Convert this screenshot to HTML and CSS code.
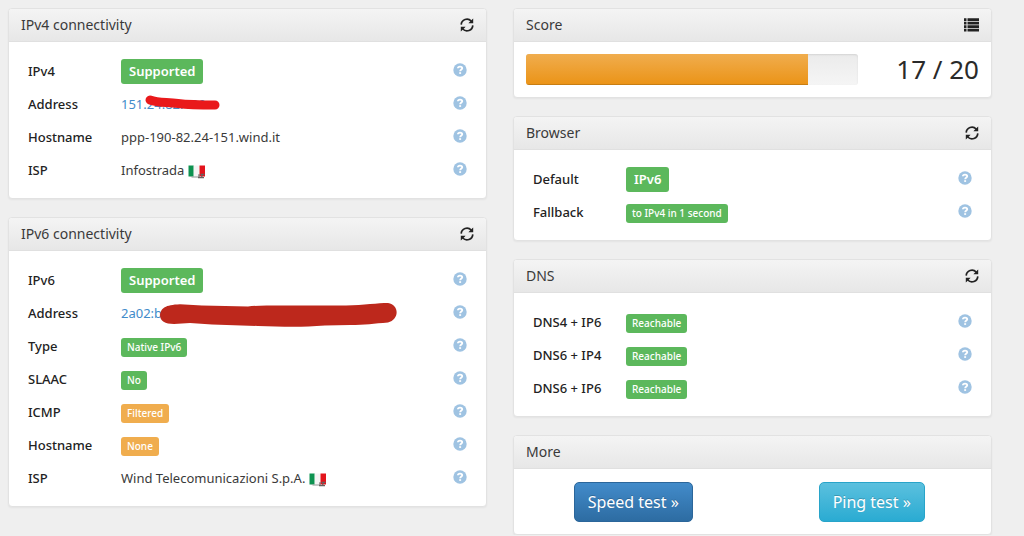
FILE: index.html
```html
<!DOCTYPE html>
<html lang="en">
<head>
    <meta charset="UTF-8">
    <meta name="viewport" content="width=device-width, initial-scale=1.0">
    <title>IPv6 test</title>
    <link rel="stylesheet" href="styles.css">
</head>
<body>

<svg class="sprite" aria-hidden="true">
    <symbol id="refresh" viewBox="0 0 14 14">
        <path d="M1.2 6.6A5.8 5.8 0 0 1 11.200 3M12.8 7.4A5.8 5.8 0 0 1 2.800 11" fill="none" stroke="currentColor" stroke-width="1.7"/>
        <path d="M13.200 .4V5.200H8.400L10 3.600 11.300 2.200zM.8 13.600V8.800H5.600L4 10.400 2.700 11.800z" fill="currentColor"/>
    </symbol>
    <symbol id="list" viewBox="0 0 15 14">
        <path d="M0 .3h2.500v2.700H0zM3.500 .3h11.500v2.700H3.500zM0 3.800h2.500v2.700H0zM3.500 3.800h11.500v2.700H3.500zM0 7.300h2.500v2.700H0zM3.500 7.300h11.500v2.700H3.500zM0 10.800h2.500v2.700H0zM3.500 10.800h11.500v2.700H3.500z" fill="currentColor"/>
    </symbol>
    <symbol id="help" viewBox="0 0 14 14">
        <circle cx="7" cy="7" r="6.700" fill="currentColor"/>
        <path d="M4.900 5.300C5 3.900 5.900 3.600 7 3.600c1.300 0 2.200.6 2.200 1.600C9.200 6.500 7.200 6.500 7.200 8.300" fill="none" stroke="#fff" stroke-width="1.900"/>
        <path d="M6.200 9.200h1.900v1.700H6.200z" fill="#fff"/>
    </symbol>
    <symbol id="flag" viewBox="0 0 18 14">
        <path d="M.5.500h5.200v11H.5z" fill="#0d9250"/>
        <path d="M5.700.500h5.800v11H5.700z" fill="#f4f4f4"/>
        <path d="M11.500.500h5.500v11h-5.500z" fill="#e3141c"/>
        <path d="M2 11.500h8l1.500 1H4z" fill="#8f9593"/>
        <path d="M11 9.300v3.200M12.500 9.300h4M14.500 9.300l-1 3.200M10 12.700h6" fill="none" stroke="#68605f" stroke-width="1.200"/>
    </symbol>
</svg>

<main class="container">

<div class="column">

<section class="panel">
    <header class="panel-heading">
        <h2>IPv4 connectivity</h2>
        <button class="icon-btn" aria-label="Refresh IPv4"><svg class="icon"><use href="#refresh"/></svg></button>
    </header>
    <div class="panel-body">
        <table>
            <tr><th scope="row">IPv4</th><td><span class="label label-lg">Supported</span></td><td class="help"><button class="icon-btn" aria-label="Help"><svg class="icon"><use href="#help"/></svg></button></td></tr>
            <tr><th scope="row">Address</th><td><span class="address"><a href="#">151.24.82.190</a><svg class="marker marker-v4" viewBox="0 0 76 18"><path d="M6 6C14 9 22 8 34 9.500S54 11 71 11" fill="none" stroke="#e9191b" stroke-width="9" stroke-linecap="round"/></svg></span></td><td class="help"><button class="icon-btn" aria-label="Help"><svg class="icon"><use href="#help"/></svg></button></td></tr>
            <tr><th scope="row">Hostname</th><td>ppp-190-82.24-151.wind.it</td><td class="help"><button class="icon-btn" aria-label="Help"><svg class="icon"><use href="#help"/></svg></button></td></tr>
            <tr><th scope="row">ISP</th><td>Infostrada <svg class="flag"><use href="#flag"/></svg></td><td class="help"><button class="icon-btn" aria-label="Help"><svg class="icon"><use href="#help"/></svg></button></td></tr>
        </table>
    </div>
</section>

<section class="panel">
    <header class="panel-heading">
        <h2>IPv6 connectivity</h2>
        <button class="icon-btn" aria-label="Refresh IPv6"><svg class="icon"><use href="#refresh"/></svg></button>
    </header>
    <div class="panel-body">
        <table>
            <tr><th scope="row">IPv6</th><td><span class="label label-lg">Supported</span></td><td class="help"><button class="icon-btn" aria-label="Help"><svg class="icon"><use href="#help"/></svg></button></td></tr>
            <tr><th scope="row">Address</th><td><span class="address"><a href="#">2a02:b</a><svg class="marker marker-v6" viewBox="0 0 238 26"><path d="M0 13C1 6 5 3 20 2.300L42 3.500 88 4.500C104 2.500 150 4 186 3.500 204 3 218 1 228 1 240 3 239 18 228 20.500 214 21.500 205 23 190 23L165 23.500C140 25.500 120 24.500 98 24L52 22.500 30 21 14 22C5 22 0 19 0 13z" fill="#bd281c"/></svg></span></td><td class="help"><button class="icon-btn" aria-label="Help"><svg class="icon"><use href="#help"/></svg></button></td></tr>
            <tr><th scope="row">Type</th><td><span class="label">Native IPv6</span></td><td class="help"><button class="icon-btn" aria-label="Help"><svg class="icon"><use href="#help"/></svg></button></td></tr>
            <tr><th scope="row">SLAAC</th><td><span class="label">No</span></td><td class="help"><button class="icon-btn" aria-label="Help"><svg class="icon"><use href="#help"/></svg></button></td></tr>
            <tr><th scope="row">ICMP</th><td><span class="label label-warning">Filtered</span></td><td class="help"><button class="icon-btn" aria-label="Help"><svg class="icon"><use href="#help"/></svg></button></td></tr>
            <tr><th scope="row">Hostname</th><td><span class="label label-warning">None</span></td><td class="help"><button class="icon-btn" aria-label="Help"><svg class="icon"><use href="#help"/></svg></button></td></tr>
            <tr><th scope="row">ISP</th><td>Wind Telecomunicazioni S.p.A. <svg class="flag"><use href="#flag"/></svg></td><td class="help"><button class="icon-btn" aria-label="Help"><svg class="icon"><use href="#help"/></svg></button></td></tr>
        </table>
    </div>
</section>

</div>

<div class="column">

<section class="panel">
    <header class="panel-heading">
        <h2>Score</h2>
        <button class="icon-btn" aria-label="Score details"><svg class="icon icon-list"><use href="#list"/></svg></button>
    </header>
    <div class="panel-body score">
        <div class="progress"><div class="progress-bar" style="width: 85%"></div></div>
        <div class="points">17 / 20</div>
    </div>
</section>

<section class="panel">
    <header class="panel-heading">
        <h2>Browser</h2>
        <button class="icon-btn" aria-label="Refresh browser"><svg class="icon"><use href="#refresh"/></svg></button>
    </header>
    <div class="panel-body">
        <table>
            <tr><th scope="row">Default</th><td><span class="label label-lg">IPv6</span></td><td class="help"><button class="icon-btn" aria-label="Help"><svg class="icon"><use href="#help"/></svg></button></td></tr>
            <tr><th scope="row">Fallback</th><td><span class="label">to IPv4 in 1 second</span></td><td class="help"><button class="icon-btn" aria-label="Help"><svg class="icon"><use href="#help"/></svg></button></td></tr>
        </table>
    </div>
</section>

<section class="panel">
    <header class="panel-heading">
        <h2>DNS</h2>
        <button class="icon-btn" aria-label="Refresh DNS"><svg class="icon"><use href="#refresh"/></svg></button>
    </header>
    <div class="panel-body">
        <table>
            <tr><th scope="row">DNS4 + IP6</th><td><span class="label">Reachable</span></td><td class="help"><button class="icon-btn" aria-label="Help"><svg class="icon"><use href="#help"/></svg></button></td></tr>
            <tr><th scope="row">DNS6 + IP4</th><td><span class="label">Reachable</span></td><td class="help"><button class="icon-btn" aria-label="Help"><svg class="icon"><use href="#help"/></svg></button></td></tr>
            <tr><th scope="row">DNS6 + IP6</th><td><span class="label">Reachable</span></td><td class="help"><button class="icon-btn" aria-label="Help"><svg class="icon"><use href="#help"/></svg></button></td></tr>
        </table>
    </div>
</section>

<section class="panel">
    <header class="panel-heading">
        <h2>More</h2>
    </header>
    <div class="panel-body more">
        <a class="btn btn-primary" href="#">Speed test »</a>
        <a class="btn btn-info" href="#">Ping test »</a>
    </div>
</section>

</div>

</main>

</body>
</html>
```
FILE: styles.css
```css
*{
    box-sizing: border-box;
}

body{
    margin: 0;
    background-color: #efefef;
    color: #3a3a3a;
    font-family: "Noto Sans", "Open Sans", sans-serif;
    font-size: 13px;
    line-height: 19px;
}

.sprite{
    display: none;
}

.container{
    display: grid;
    grid-template-columns: 1fr 1fr;
    gap: 26px;
    padding: 8px 32px 0 8px;
}

.column{
    display: flex;
    flex-direction: column;
    gap: 18px;
}

.panel{
    background-color: white;
    border: 1px solid #e2e2e2;
    border-radius: 4px;
    box-shadow: 0 1px 2px rgba(0, 0, 0, 0.05);
}

.panel-heading{
    display: flex;
    justify-content: space-between;
    align-items: center;
    height: 33px;
    padding: 0 12px 1px;
    background-image: linear-gradient(#f4f4f4, #e7e7e7);
    border-bottom: 1px solid #e0e0e0;
    border-radius: 3px 3px 0 0;
}

.panel-heading h2{
    margin: 0;
    padding-bottom: 1px;
    font-size: 14px;
    font-weight: 400;
}

.panel-body{
    padding: 12px;
}

.icon-btn{
    display: flex;
    padding: 0;
    border: none;
    background: none;
    color: #222;
    cursor: pointer;
}

.icon{
    width: 14px;
    height: 14px;
}

.icon-list{
    width: 15px;
}

table{
    width: 100%;
    table-layout: fixed;
    border-collapse: collapse;
}

tr{
    height: 33px;
}

th, td{
    padding: 2px 0 0;
    text-align: left;
    vertical-align: middle;
    white-space: nowrap;
}

th{
    width: 100px;
    padding-left: 7px;
    color: #222;
    font-weight: 500;
}

.help{
    width: 21px;
    padding: 0 0 1px;
}

.help .icon-btn{
    color: #9fc3e2;
}

a{
    color: #428bca;
    text-decoration: none;
}

.label{
    display: inline-block;
    padding: 0 6px;
    border-radius: 3px;
    background-color: #5cb85c;
    color: white;
    font-size: 10px;
    font-weight: 500;
    vertical-align: middle;
}

.label-lg{
    padding: 3px 8px;
    font-size: 13px;
    font-weight: 600;
}

.label-warning{
    background-color: #f0ad4e;
}

.flag{
    width: 18px;
    height: 14px;
    vertical-align: middle;
}

/*pen strokes drawn over the addresses*/
.address{
    position: relative;
}

.marker{
    position: absolute;
}

.marker-v4{
    top: -1px;
    left: 23px;
    width: 76px;
    height: 18px;
}

.marker-v6{
    top: -2px;
    left: 39px;
    width: 238px;
    height: 26px;
}

.score{
    display: grid;
    grid-template-columns: 3fr 1fr;
    gap: 10px;
    align-items: center;
}

.progress{
    height: 31px;
    overflow: hidden;
    border-radius: 3px;
    background-image: linear-gradient(#ebebeb, #f5f5f5);
    box-shadow: inset 0 1px 2px rgba(0, 0, 0, 0.1);
}

.progress-bar{
    height: 100%;
    background-image: linear-gradient(#f0ad4e, #eb9316);
    box-shadow: inset 0 -1px 0 rgba(0, 0, 0, 0.15);
}

.points{
    color: #2a2a2a;
    font-size: 26px;
    text-align: right;
    white-space: nowrap;
}

.more{
    display: grid;
    grid-template-columns: 1fr 1fr;
    justify-items: center;
    padding: 13px 0 12px;
}

.btn{
    padding: 9px 13px;
    border: 1px solid;
    border-radius: 5px;
    color: white;
    font-size: 16px;
    line-height: 20px;
    text-shadow: 0 -1px 0 rgba(0, 0, 0, 0.2);
}

.btn-primary{
    background-image: linear-gradient(#428bca, #2d6ca2);
    border-color: #2b669a;
}

.btn-info{
    background-image: linear-gradient(#5bc0de, #2aabd2);
    border-color: #28a4c9;
}
```
